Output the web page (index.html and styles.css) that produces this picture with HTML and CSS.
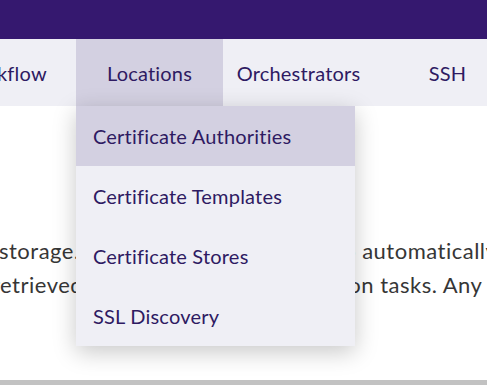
FILE: index.html
```
<!DOCTYPE html>
<html lang="en">
<head>
<meta charset="utf-8">
<title>Locations menu</title>
<link rel="stylesheet" href="styles.css">
</head>
<body>
<header class="topbar"></header>
<nav class="nav">
  <div class="tab">Workflow</div>
  <div class="tab tab-active">Locations
    <ul class="dropdown">
      <li class="dd-item dd-active">Certificate Authorities</li>
      <li class="dd-item">Certificate Templates</li>
      <li class="dd-item">Certificate Stores</li>
      <li class="dd-item">SSL Discovery</li>
    </ul>
  </div>
  <div class="tab tab-orch">Orchestrators</div>
  <div class="tab tab-ssh">SSH</div>
</nav>
<main class="content">
  <p class="text">
    <span class="line line1">storage. Certificates can be used to automatically</span>
    <span class="line line2">retrieved in all inventory, and location tasks. Any</span>
  </p>
</main>
<div class="bottombar"></div>
</body>
</html>
```
FILE: styles.css
```
html, body {
  margin: 0;
  padding: 0;
  width: 487px;
  height: 385px;
  overflow: hidden;
  background: #ffffff;
  font-family: Lato, "Open Sans", sans-serif;
  letter-spacing: 0.2px;
}

.topbar {
  height: 39px;
  background: #35186f;
}

.nav {
  display: flex;
  height: 67px;
  background: #efeff5;
  margin-left: -71px;
  position: relative;
  z-index: 2;
}

.tab {
  position: relative;
  width: 147px;
  flex: none;
  display: flex;
  align-items: center;
  justify-content: center;
  font-size: 20px;
  color: #2e1a62;
}

.tab-orch {
  width: 151px;
}

.tab-active {
  background: #d3d0e1;
}

.dropdown {
  position: absolute;
  left: 0;
  top: 100%;
  width: 279px;
  margin: 0;
  padding: 0;
  list-style: none;
  background: #efeff5;
  box-shadow: 0 6px 22px rgba(0, 0, 0, 0.22);
}

.dd-item {
  height: 60px;
  display: flex;
  align-items: center;
  padding-left: 17px;
  font-size: 20px;
  color: #2e1a62;
}

.dd-active {
  background: #d3d0e1;
}

.content {
  height: 274px;
  position: relative;
  z-index: 1;
}

.text {
  margin: 0;
  padding-top: 128px;
  font-size: 22px;
  letter-spacing: 0.5px;
  line-height: 34px;
  color: #363636;
  white-space: nowrap;
}

.line {
  display: block;
}

.line1 {
  margin-left: -1px;
}

.line2 {
  margin-left: -8px;
}

.bottombar {
  height: 5px;
  background: #c2c2c2;
}
```
